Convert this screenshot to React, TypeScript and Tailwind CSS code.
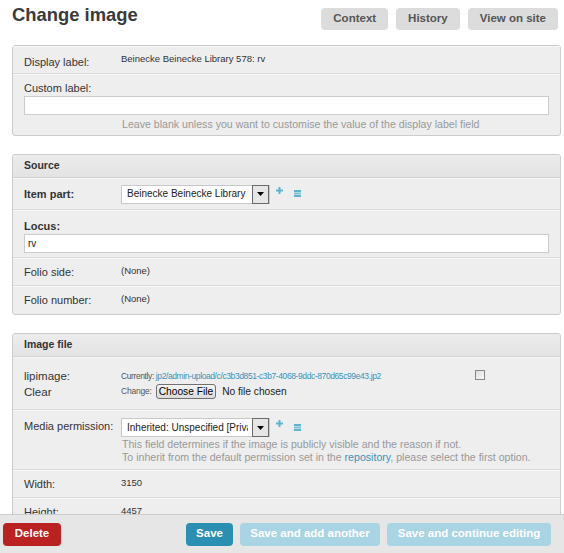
import React from "react";

const font = { fontFamily: '"Liberation Sans", Arial, sans-serif' };

function Plus() {
  return (
    <svg width="7" height="7" viewBox="0 0 7 7" className="block">
      <rect x="2.5" y="0" width="2" height="7" fill="#5fb3cc" />
      <rect x="0" y="2.5" width="7" height="2" fill="#5fb3cc" />
    </svg>
  );
}

function ListIcon() {
  return (
    <svg width="7" height="7" viewBox="0 0 7 7" className="block">
      <rect x="0" y="0" width="7" height="2" fill="#5fb3cc" />
      <rect x="0" y="2.5" width="7" height="2" fill="#7cc2d6" />
      <rect x="0" y="5" width="7" height="2" fill="#5fb3cc" />
    </svg>
  );
}

function FakeSelect({ text }: { text: string }) {
  return (
    <div className="flex items-center">
      <div className="flex h-[19px] w-[149px] items-center border border-[#c8c8c8] bg-white">
        <div className="mr-[4px] flex-1 overflow-hidden whitespace-nowrap pl-[5px] text-[10px] leading-none text-[#222]">
          {text}
        </div>
        <div className="flex h-[19px] w-[17px] items-center justify-center border border-[#6a6a6a] bg-[#e6e6e6]">
          <svg width="7" height="4" viewBox="0 0 7 4" className="block">
            <polygon points="0,0 7,0 3.5,4" fill="#000" />
          </svg>
        </div>
      </div>
      <div className="ml-[6px] -mt-[8px]">
        <Plus />
      </div>
      <div className="ml-[11px] -mt-[1px]">
        <ListIcon />
      </div>
    </div>
  );
}

function Row({
  children,
  last,
  className = "",
}: {
  children: React.ReactNode;
  last?: boolean;
  className?: string;
}) {
  return (
    <div
      className={
        "px-[11px] " +
        (last ? "" : "border-b border-[#d9d9d9] ") +
        "border-t border-t-[#f7f7f7] " +
        className
      }
    >
      {children}
    </div>
  );
}

function Header({ title }: { title: string }) {
  return (
    <div className="flex h-[23px] items-center border-b border-[#d3d3d3] bg-gradient-to-b from-[#ececec] to-[#e3e3e3] px-[11px] text-[10.5px] font-bold text-[#333]">
      {title}
    </div>
  );
}

export default function App() {
  return (
    <div
      style={font}
      className="relative h-[553px] w-full overflow-hidden bg-white pl-3 pr-[3px] text-[#333]"
    >
      <div className="flex items-start justify-between">
        <h1 className="mt-[4px] text-[18.4px] font-bold leading-[22px] text-[#3a3a3a]">
          Change image
        </h1>
        <div className="mt-[8px] flex gap-[8px] pr-[3px]">
          {["Context", "History", "View on site"].map((b) => (
            <div
              key={b}
              className="flex h-[22px] items-center rounded-[4px] bg-[#dcdcdc] px-[12px] text-[11.5px] font-bold text-[#555]"
            >
              {b}
            </div>
          ))}
        </div>
      </div>

      {/* Fieldset 1 */}
      <div className="mt-[15px] rounded-[3px] border border-[#cccccc] bg-[#eeeeee]">
        <Row className="flex h-[28px] items-start">
          <div className="mt-[9px] w-[97px] text-[11px] leading-[13px]">Display label:</div>
          <div className="mt-[5px] text-[9.5px] leading-[13px]">Beinecke Beinecke Library 578: rv</div>
        </Row>
        <Row last className="pb-[4px] pt-[7px]">
          <div className="text-[11px] leading-[13px]">Custom label:</div>
          <div className="mt-[1px] h-[19px] w-[525px] border border-[#cccccc] bg-white" />
          <div className="mt-[3px] pl-[98px] text-[10.6px] leading-[13px] text-[#999]">
            Leave blank unless you want to customise the value of the display label field
          </div>
        </Row>
      </div>

      {/* Source */}
      <div className="mt-[18px] overflow-hidden rounded-[3px] border border-[#cccccc] bg-[#eeeeee]">
        <Header title="Source" />
        <Row className="flex h-[32px] items-center">
          <div className="w-[97px] text-[11px] font-bold leading-[13px]">Item part:</div>
          <FakeSelect text="Beinecke Beinecke Library 578" />
        </Row>
        <Row className="h-[48px] pt-[9px]">
          <div className="text-[11px] font-bold leading-[13px]">Locus:</div>
          <div className="mt-[1px] flex h-[19px] w-[525px] items-center border border-[#cccccc] bg-white pl-[3px] text-[10px] text-[#222]">
            rv
          </div>
        </Row>
        <Row className="flex h-[28px] items-start">
          <div className="mt-[7px] w-[97px] text-[11px] leading-[13px]">Folio side:</div>
          <div className="mt-[5px] text-[9.5px] leading-[13px]">(None)</div>
        </Row>
        <Row last className="flex h-[28px] items-start">
          <div className="mt-[7px] w-[97px] text-[11px] leading-[13px]">Folio number:</div>
          <div className="mt-[5px] text-[9.5px] leading-[13px]">(None)</div>
        </Row>
      </div>

      {/* Image file */}
      <div className="mt-[18px] overflow-hidden rounded-[3px] border border-[#cccccc] bg-[#eeeeee]">
        <Header title="Image file" />
        <Row className="flex h-[53px] items-start">
          <div className="mt-[10px] w-[97px] text-[11.5px] leading-[16px]">
            <div>lipimage:</div>
            <div>Clear</div>
          </div>
          <div className="mt-[11px] flex-1">
            <div className="text-[8.5px] leading-[14px] tracking-[-0.4px] text-[#555]">
              Currently:{" "}
              <span className="text-[#3a92b8]">
                jp2/admin-upload/c/c3b3d851-c3b7-4068-9ddc-870d65c99e43.jp2
              </span>
            </div>
            <div className="mt-[1px] flex items-center text-[8.5px] tracking-[-0.2px] text-[#555]">
              Change:
              <div className="ml-[4px] flex h-[15px] items-center rounded-[3px] border border-[#707070] bg-gradient-to-b from-[#f4f4f4] to-[#dcdcdc] px-[2px] text-[10.2px] tracking-normal text-black">
                Choose File
              </div>
              <span className="ml-[6px] text-[10.2px] tracking-normal text-[#222]">No file chosen</span>
            </div>
          </div>
          <div className="mr-[64px] mt-[12px] h-[10px] w-[10px] border border-[#888] bg-gradient-to-br from-[#dcdcdc] to-[#fafafa]" />
        </Row>
        <Row className="flex h-[60px] items-start pt-[7px]">
          <div className="mt-[2px] w-[97px] text-[11px] leading-[13px]">Media permission:</div>
          <div>
            <FakeSelect text="Inherited: Unspecified [Private]" />
            <div className="mt-[1px] pl-[1px] text-[10.6px] leading-[13px] text-[#999]">
              This field determines if the image is publicly visible and the reason if not.
            </div>
            <div className="pl-[1px] text-[10.6px] leading-[13px] text-[#999]">
              To inherit from the default permission set in the{" "}
              <span className="text-[#3a92b8]">repository</span>, please select the first option.
            </div>
          </div>
        </Row>
        <Row className="flex h-[28px] items-start">
          <div className="mt-[7px] w-[97px] text-[11px] leading-[13px]">Width:</div>
          <div className="mt-[5px] text-[9.5px] leading-[13px]">3150</div>
        </Row>
        <Row last className="flex h-[40px] items-start">
          <div className="mt-[7px] w-[97px] text-[11px] leading-[13px]">Height:</div>
          <div className="mt-[5px] text-[9.5px] leading-[13px]">4457</div>
        </Row>
      </div>

      {/* Footer (sticky submit row) */}
      <div className="absolute bottom-0 left-0 right-0 flex h-[39px] items-center border-t border-[#cccccc] bg-[#e6e6e6] pl-[3px] pr-[13px]">
        <div className="flex h-[23px] w-[58px] items-center justify-center rounded-[4px] bg-[#ba2121] text-[11.5px] font-bold text-white">
          Delete
        </div>
        <div className="ml-auto flex gap-[7px]">
          <div className="flex h-[23px] w-[47px] items-center justify-center rounded-[4px] bg-[#2b8fb2] text-[11.5px] font-bold text-white">
            Save
          </div>
          <div className="flex h-[23px] w-[140px] items-center justify-center rounded-[4px] bg-[#a9d4e3] text-[11.5px] font-bold text-white">
            Save and add another
          </div>
          <div className="flex h-[23px] w-[164px] items-center justify-center rounded-[4px] bg-[#a9d4e3] text-[11.5px] font-bold text-white">
            Save and continue editing
          </div>
        </div>
      </div>
    </div>
  );
}
